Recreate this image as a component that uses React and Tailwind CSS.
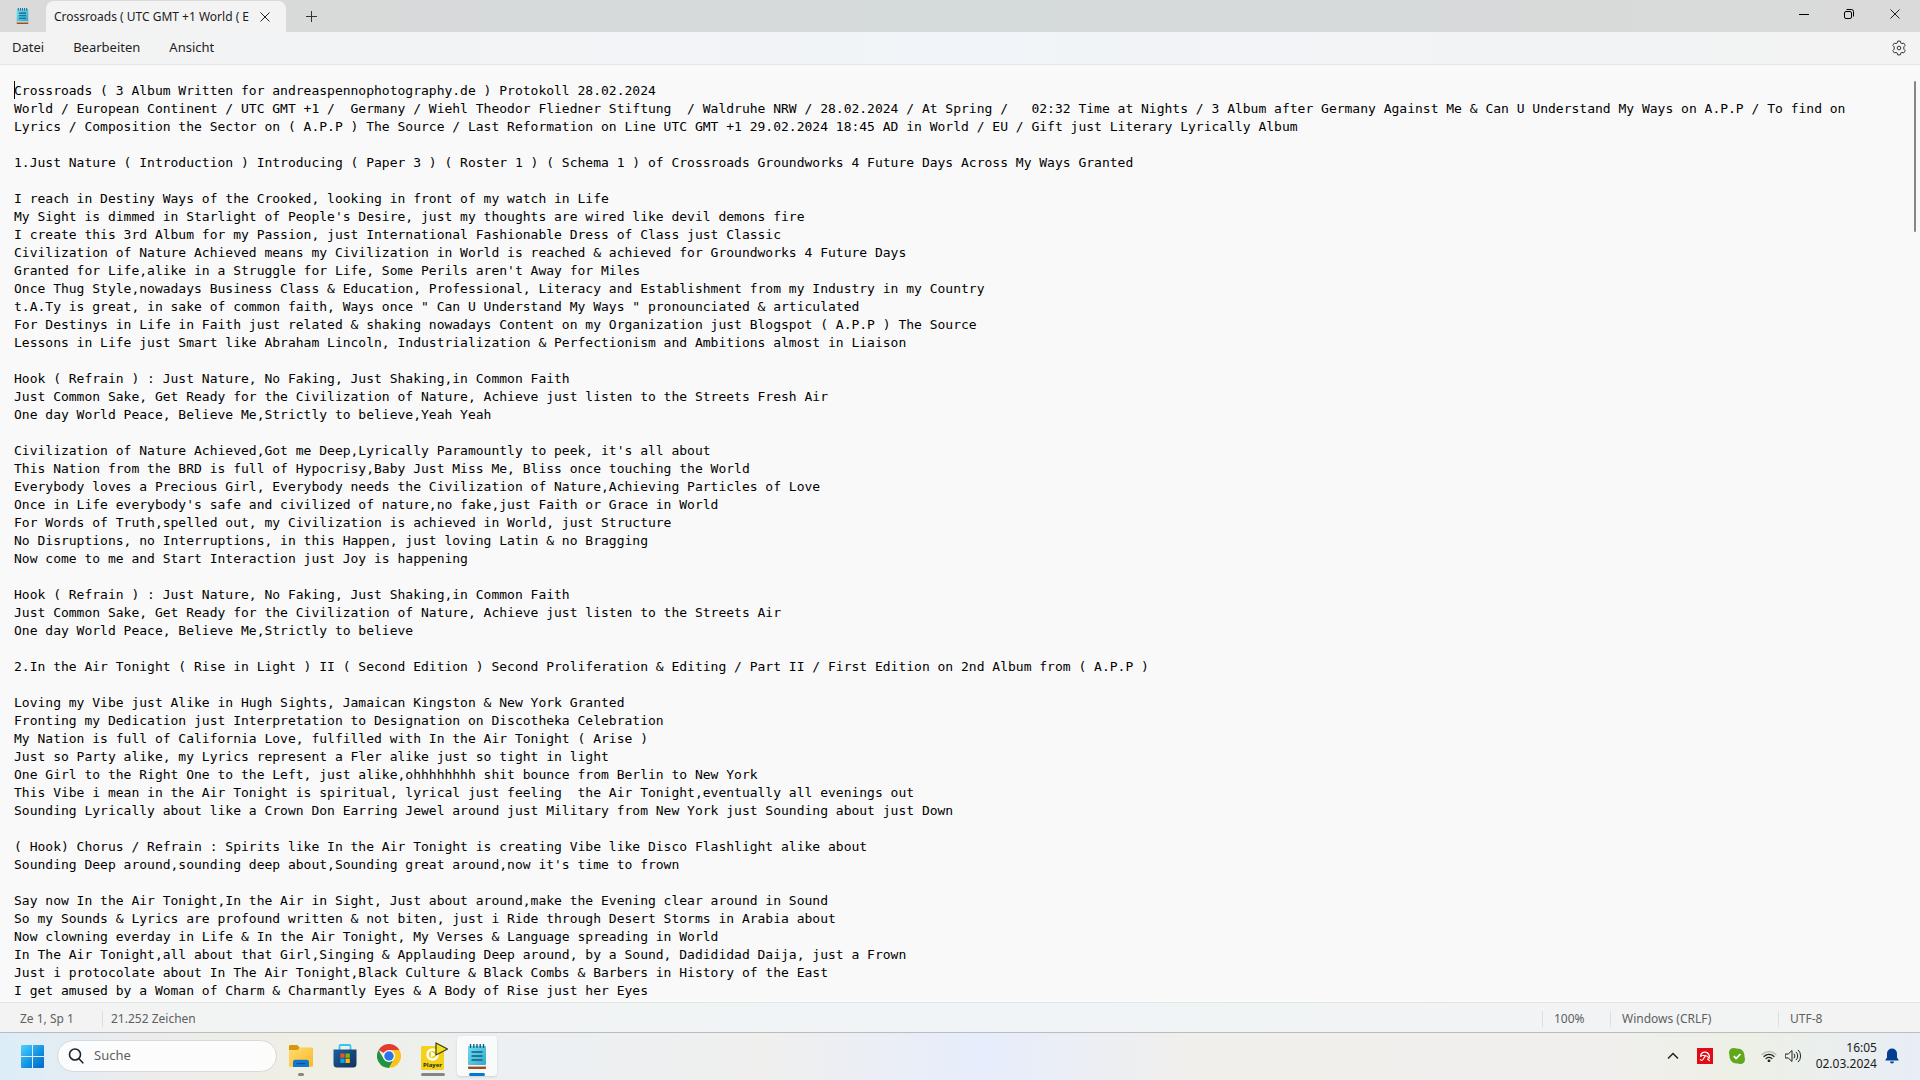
import { useState } from 'react'

const initialText = `Crossroads ( 3 Album Written for andreaspennophotography.de ) Protokoll 28.02.2024
World / European Continent / UTC GMT +1 /  Germany / Wiehl Theodor Fliedner Stiftung  / Waldruhe NRW / 28.02.2024 / At Spring /   02:32 Time at Nights / 3 Album after Germany Against Me & Can U Understand My Ways on A.P.P / To find on Lyrics / Composition the Sector on ( A.P.P ) The Source / Last Reformation on Line UTC GMT +1 29.02.2024 18:45 AD in World / EU / Gift just Literary Lyrically Album

1.Just Nature ( Introduction ) Introducing ( Paper 3 ) ( Roster 1 ) ( Schema 1 ) of Crossroads Groundworks 4 Future Days Across My Ways Granted

I reach in Destiny Ways of the Crooked, looking in front of my watch in Life
My Sight is dimmed in Starlight of People's Desire, just my thoughts are wired like devil demons fire
I create this 3rd Album for my Passion, just International Fashionable Dress of Class just Classic
Civilization of Nature Achieved means my Civilization in World is reached & achieved for Groundworks 4 Future Days
Granted for Life,alike in a Struggle for Life, Some Perils aren't Away for Miles
Once Thug Style,nowadays Business Class & Education, Professional, Literacy and Establishment from my Industry in my Country
t.A.Ty is great, in sake of common faith, Ways once " Can U Understand My Ways " pronounciated & articulated
For Destinys in Life in Faith just related & shaking nowadays Content on my Organization just Blogspot ( A.P.P ) The Source
Lessons in Life just Smart like Abraham Lincoln, Industrialization & Perfectionism and Ambitions almost in Liaison

Hook ( Refrain ) : Just Nature, No Faking, Just Shaking,in Common Faith
Just Common Sake, Get Ready for the Civilization of Nature, Achieve just listen to the Streets Fresh Air
One day World Peace, Believe Me,Strictly to believe,Yeah Yeah

Civilization of Nature Achieved,Got me Deep,Lyrically Paramountly to peek, it's all about
This Nation from the BRD is full of Hypocrisy,Baby Just Miss Me, Bliss once touching the World
Everybody loves a Precious Girl, Everybody needs the Civilization of Nature,Achieving Particles of Love
Once in Life everybody's safe and civilized of nature,no fake,just Faith or Grace in World
For Words of Truth,spelled out, my Civilization is achieved in World, just Structure
No Disruptions, no Interruptions, in this Happen, just loving Latin & no Bragging
Now come to me and Start Interaction just Joy is happening

Hook ( Refrain ) : Just Nature, No Faking, Just Shaking,in Common Faith
Just Common Sake, Get Ready for the Civilization of Nature, Achieve just listen to the Streets Air
One day World Peace, Believe Me,Strictly to believe

2.In the Air Tonight ( Rise in Light ) II ( Second Edition ) Second Proliferation & Editing / Part II / First Edition on 2nd Album from ( A.P.P )

Loving my Vibe just Alike in Hugh Sights, Jamaican Kingston & New York Granted
Fronting my Dedication just Interpretation to Designation on Discotheka Celebration
My Nation is full of California Love, fulfilled with In the Air Tonight ( Arise )
Just so Party alike, my Lyrics represent a Fler alike just so tight in light
One Girl to the Right One to the Left, just alike,ohhhhhhhh shit bounce from Berlin to New York
This Vibe i mean in the Air Tonight is spiritual, lyrical just feeling  the Air Tonight,eventually all evenings out
Sounding Lyrically about like a Crown Don Earring Jewel around just Military from New York just Sounding about just Down

( Hook) Chorus / Refrain : Spirits like In the Air Tonight is creating Vibe like Disco Flashlight alike about
Sounding Deep around,sounding deep about,Sounding great around,now it's time to frown

Say now In the Air Tonight,In the Air in Sight, Just about around,make the Evening clear around in Sound
So my Sounds & Lyrics are profound written & not biten, just i Ride through Desert Storms in Arabia about
Now clowning everday in Life & In the Air Tonight, My Verses & Language spreading in World
In The Air Tonight,all about that Girl,Singing & Applauding Deep around, by a Sound, Dadididad Daija, just a Frown
Just i protocolate about In The Air Tonight,Black Culture & Black Combs & Barbers in History of the East
I get amused by a Woman of Charm & Charmantly Eyes & A Body of Rise just her Eyes`

const menus = ['Datei', 'Bearbeiten', 'Ansicht']

function NotepadIcon({ className }) {
  return (
    <svg viewBox="0 0 20 25" className={className} aria-hidden="true">
      <defs>
        <linearGradient id="pad" x1="0" y1="0" x2="1" y2="1">
          <stop offset="0" stopColor="#6fdcf2" />
          <stop offset="1" stopColor="#35a9cc" />
        </linearGradient>
      </defs>
      <rect x="1" y="20" width="18" height="5" rx="1" fill="#a34a17" />
      <rect x="1" y="20" width="18" height="2.6" fill="#f3f3f3" />
      <rect x="1" y="2" width="18" height="19" rx="1" fill="url(#pad)" />
      <path d="M3.5 0v4M6.8 0v4M10 0v4M13.2 0v4M16.5 0v4" stroke="#14607c" strokeWidth="1.4" />
      <path d="M4.5 8h11M4.5 12h11M4.5 16h11" stroke="#0f5f80" strokeWidth="1.6" />
    </svg>
  )
}

function WindowsIcon() {
  return (
    <svg viewBox="0 0 23 23" className="size-[23px]" aria-hidden="true">
      <defs>
        <linearGradient id="win" gradientUnits="userSpaceOnUse" x1="0" y1="0" x2="23" y2="23">
          <stop offset="0" stopColor="#4fd0ff" />
          <stop offset="0.55" stopColor="#1593e2" />
          <stop offset="1" stopColor="#0067c8" />
        </linearGradient>
      </defs>
      <path d="M1 0h10v11H0V1a1 1 0 0 1 1-1zM12 0h10a1 1 0 0 1 1 1v10H12zM0 12h11v11H1a1 1 0 0 1-1-1zM12 12h11v10a1 1 0 0 1-1 1H12z" fill="url(#win)" />
    </svg>
  )
}

function FolderIcon() {
  return (
    <svg viewBox="0 0 24 22" className="h-[22px] w-6" aria-hidden="true">
      <defs>
        <linearGradient id="folder" x1="0" y1="0" x2="1" y2="1">
          <stop offset="0" stopColor="#ffdc6e" />
          <stop offset="1" stopColor="#f9b92b" />
        </linearGradient>
      </defs>
      <path d="M0 1.2A1.2 1.2 0 0 1 1.2 0h7l2.5 2.4V6H0z" fill="#d9960a" />
      <path d="M0 5h8.6l2.2-2.4H23a1 1 0 0 1 1 1v17.200a1 1 0 0 1-1 1H1a1 1 0 0 1-1-1z" fill="url(#folder)" />
      <path d="M4 22v-5a2.300 2.300 0 0 1 2.300-2.300h11.400A2.300 2.300 0 0 1 20 17v5z" fill="#1277cf" />
      <path d="M7.500 18.600h9" stroke="#0b4f96" strokeWidth="1.200" />
    </svg>
  )
}

function StoreIcon() {
  return (
    <svg viewBox="0 0 24 24" className="size-6" aria-hidden="true">
      <defs>
        <linearGradient id="store" x1="0" y1="0" x2="1" y2="1">
          <stop offset="0" stopColor="#1c5f9e" />
          <stop offset="1" stopColor="#152f5c" />
        </linearGradient>
      </defs>
      <path d="M6.500 6V2.200A1.200 1.200 0 0 1 7.700 1h8.600a1.200 1.200 0 0 1 1.200 1.200V6" fill="none" stroke="#37c3f5" strokeWidth="1.800" />
      <path d="M.5 5.500h23V20a3.500 3.500 0 0 1-3.500 3.500H4A3.500 3.500 0 0 1 .5 20z" fill="url(#store)" />
      <path d="M7.300 9.500h4.300v4.300H7.300z" fill="#f25022" />
      <path d="M12.500 9.500h4.300v4.300h-4.300z" fill="#7fba00" />
      <path d="M7.300 14.700h4.300V19H7.300z" fill="#00a4ef" />
      <path d="M12.500 14.700h4.300V19h-4.300z" fill="#ffb900" />
    </svg>
  )
}

function ChromeIcon() {
  return (
    <svg viewBox="0 0 48 48" className="size-6" aria-hidden="true">
      <path d="M24 24 3.200 12A24 24 0 0 1 44.800 12z" fill="#e33b2e" />
      <path d="M3.200 12 13.600 30 24 36l5-1-5 13A24 24 0 0 1 3.200 12z" fill="#229342" />
      <path d="M24 34.500 34.400 30 24 48z" fill="#229342" />
      <path d="M34.400 30 24 48a24 24 0 0 0 20.800-36H24z" fill="#fcc31e" />
      <circle cx="24" cy="24" r="12" fill="#fff" />
      <circle cx="24" cy="24" r="9.500" fill="#2a74e8" />
    </svg>
  )
}

function PlayerIcon() {
  return (
    <svg viewBox="0 0 28 28" className="ml-1 size-7" aria-hidden="true">
      <rect x="0" y="4" width="23" height="24" rx="1.500" fill="#f2d21b" />
      <circle cx="11.500" cy="12.500" r="5" fill="none" stroke="#fff" strokeWidth="2.500" />
      <path d="M10 9.500v6l4.500-3z" fill="#fff" />
      <text x="11.500" y="25" textAnchor="middle" fontSize="6" fontWeight="700" fontFamily="Open Sans, sans-serif" fill="#2a2a10">
        Player
      </text>
      <path d="M15 1v12l11.500-6z" fill="#f2e01c" stroke="#3a3a1a" strokeWidth="1.200" strokeLinejoin="round" />
    </svg>
  )
}

function GearIcon() {
  return (
    <svg viewBox="0 0 16 16" className="size-4" fill="none" stroke="#333" strokeLinejoin="round" aria-hidden="true">
      <path d="M6.600 1.200 Q8 .8 9.400 1.200 L9.800 3 L10.900 3.600 L12.700 3.100 Q13.700 4.200 14.100 5.500 L12.800 6.900 V9.100 L14.100 10.500 Q13.700 11.800 12.700 12.900 L10.900 12.400 L9.800 13 L9.400 14.800 Q8 15.200 6.600 14.800 L6.200 13 L5.100 12.400 L3.300 12.900 Q2.300 11.800 1.900 10.500 L3.200 9.100 V6.900 L1.900 5.500 Q2.300 4.200 3.300 3.100 L5.100 3.600 L6.200 3 Z" />
      <circle cx="8" cy="8" r="1.800" />
    </svg>
  )
}

function CloseIcon() {
  return (
    <svg viewBox="0 0 10 10" className="size-[10px]" stroke="#222" aria-hidden="true">
      <path d="M.5.5l9 9M9.500.5l-9 9" />
    </svg>
  )
}

function TitleBar() {
  return (
    <header className="flex h-8 shrink-0 items-stretch bg-linear-to-r from-[#dadada] via-[#d5dadb] to-[#dadada]">
      <div className="flex w-[46px] items-center pl-4">
        <NotepadIcon className="h-4 w-[13px]" />
      </div>
      <div className="mt-px flex w-60 items-center rounded-t-lg bg-[#f3f3f3] pl-2">
        <span className="w-48 whitespace-nowrap text-[12px] text-[#1b1b1b]">
          Crossroads ( UTC GMT +1 World ( E
        </span>
        <button type="button" aria-label="Tab schließen" className="ml-[10px] p-1">
          <CloseIcon />
        </button>
      </div>
      <button type="button" aria-label="Neuer Tab" className="ml-3 p-2">
        <svg viewBox="0 0 11 11" className="size-[11px]" stroke="#333" aria-hidden="true">
          <path d="M5.500 0v11M0 5.500h11" />
        </svg>
      </button>
      <div className="ml-auto flex items-center pb-1 pr-0.5">
        <button type="button" aria-label="Minimieren" className="flex w-11 justify-center">
          <svg viewBox="0 0 10 10" className="size-[10px]" stroke="#000" aria-hidden="true">
            <path d="M0 5.500h10" />
          </svg>
        </button>
        <button type="button" aria-label="Verkleinern" className="flex w-[46px] justify-center">
          <svg viewBox="0 0 10 10" className="size-[10px] overflow-visible" fill="none" stroke="#000" aria-hidden="true">
            <rect x=".5" y="2.500" width="7" height="7" rx="1.500" />
            <path d="M2.500.5H7.500A2 2 0 0 1 9.500 2.500v5" />
          </svg>
        </button>
        <button type="button" aria-label="Schließen" className="flex w-[46px] justify-center">
          <CloseIcon />
        </button>
      </div>
    </header>
  )
}

function MenuBar() {
  return (
    <nav className="flex h-[33px] shrink-0 items-center justify-between border-b border-[#e5e5e5] bg-linear-to-r from-[#f3f3f3] via-[#f1f4f8] to-[#f3f3f3] pl-3 pr-[13px]">
      <div className="flex gap-[29px] text-[13px] text-[#1f1f1f]">
        {menus.map((menu) => (
          <button key={menu} type="button">
            {menu}
          </button>
        ))}
      </div>
      <button type="button" aria-label="Einstellungen">
        <GearIcon />
      </button>
    </nav>
  )
}

function Editor() {
  const [text, setText] = useState(initialText)

  return (
    <main className="relative flex min-h-0 flex-1 bg-[#f9f9f9]">
      <textarea
        aria-label="Texteditor"
        spellCheck={false}
        value={text}
        onChange={(e) => setText(e.target.value)}
        className="flex-1 resize-none overflow-hidden bg-transparent pl-[14px] pr-8 pt-[17px] font-['DejaVu_Sans_Mono',monospace] text-[13px] leading-[18px] text-black outline-none"
      />
      <span className="absolute left-[14px] top-4 h-[18px] w-px bg-black" />
      <span className="absolute right-1 top-4 h-[151px] w-[2px] rounded-full bg-[#868686]" />
    </main>
  )
}

function StatusBar() {
  return (
    <footer className="flex h-[30px] shrink-0 items-center border-t border-[#e5e5e5] bg-linear-to-r from-[#f3f3f3] via-[#f0f4f6] to-[#f3f3f3] pt-0.5 text-[12px] leading-4 text-[#5f5f5f]">
      <span className="w-[102px] pl-5">Ze 1, Sp 1</span>
      <span className="border-l border-[#dedede] pl-2">21.252 Zeichen</span>
      <span className="ml-auto w-[68px] border-l border-[#dedede] pl-[11px]">100%</span>
      <span className="w-[168px] border-l border-[#dedede] pl-[11px]">Windows (CRLF)</span>
      <span className="w-[142px] border-l border-[#dedede] pl-[11px]">UTF-8</span>
    </footer>
  )
}

function TaskButton({ label, indicator, active, children }) {
  return (
    <button
      type="button"
      aria-label={label}
      className={`relative flex h-10 w-10 items-center justify-center rounded ${active ? 'bg-white/70 shadow-sm' : ''}`}
    >
      {children}
      {indicator && <span className={`absolute bottom-0 h-[3px] rounded-full ${indicator}`} />}
    </button>
  )
}

function Taskbar() {
  return (
    <div className="flex h-12 shrink-0 items-center border-t border-[#bcbcbc] bg-[linear-gradient(90deg,#dcedf8_0%,#ececee_7%,#efefe4_16%,#ecf0f3_27%,#efefee_40%,#e7edfc_51%,#f0efec_62%,#f0efed_84%,#edf0e6_91%,#e8edf6_100%)] pb-px">
      <button type="button" aria-label="Start" className="ml-[21px]">
        <WindowsIcon />
      </button>
      <label className="ml-[13px] flex h-8 w-[220px] items-center gap-[10px] rounded-full border border-[#d5dadd] bg-white/85 px-[10px]">
        <svg viewBox="0 0 16 16" className="size-4" fill="none" stroke="#222" strokeWidth="1.600" strokeLinecap="round" aria-hidden="true">
          <circle cx="7" cy="6.500" r="5.500" />
          <path d="M11 10.800l3.800 4" />
        </svg>
        <input
          type="search"
          aria-label="Suche"
          placeholder="Suche"
          className="w-36 bg-transparent text-[13px] text-[#5f5f5f] outline-none placeholder:text-[#5f5f5f]"
        />
      </label>
      <div className="ml-1 flex gap-1">
        <TaskButton label="Explorer" indicator="w-[6px] bg-[#868686]">
          <FolderIcon />
        </TaskButton>
        <TaskButton label="Microsoft Store">
          <StoreIcon />
        </TaskButton>
        <TaskButton label="Chrome">
          <ChromeIcon />
        </TaskButton>
        <TaskButton label="Player" indicator="w-6 bg-[#868686]">
          <PlayerIcon />
        </TaskButton>
        <TaskButton label="Editor" indicator="w-4 bg-[#0078d4]" active>
          <NotepadIcon className="h-[25px] w-5" />
        </TaskButton>
      </div>

      <div className="ml-auto flex items-center pr-[21px]">
        <button type="button" aria-label="Ausgeblendete Symbole" className="mr-[18px]">
          <svg viewBox="0 0 12 8" className="h-2 w-3" fill="none" stroke="#222" strokeWidth="1.500" aria-hidden="true">
            <path d="M1 6.500l5-5 5 5" />
          </svg>
        </button>
        <svg viewBox="0 0 16 16" className="mr-4 size-4" aria-hidden="true">
          <path d="M0 0h16v16H0z" fill="#e20a16" />
          <path d="M3.600 8.600C3.400 5.500 6 3.700 8.600 4.200c2.800.5 4.400 3.200 3.600 6.300" fill="none" stroke="#fff" strokeWidth="1.300" />
          <path d="M3.600 8.600c1.200-1.600 2.600-1.700 4.200-.8 1.800-.2 3.400.8 4.400 2.700" fill="none" stroke="#fff" strokeWidth="1.100" />
          <path d="M8.600 7.500l-2.600 4c-.8 1.200-2.200 1.100-2.600.1M10.500 11l2 1.600" fill="none" stroke="#fff" strokeWidth="1.200" strokeLinecap="round" />
        </svg>
        <svg viewBox="0 0 16 16" className="mr-4 size-4" aria-hidden="true">
          <path d="M4.500 0C6 0 6.500.5 8 .5c5 0 7.500 3.500 7.500 7.500 0 1.500.5 2 .5 3.500a4.500 4.500 0 0 1-4.500 4.500c-1.500 0-2-.5-3.500-.5C3.500 15.500.5 12 .5 8 .5 6.500 0 6 0 4.500A4.500 4.500 0 0 1 4.500 0z" fill="#5fa91a" />
          <path d="M4.800 8.200l2.300 2.300 4.300-4.500" fill="none" stroke="#fff" strokeWidth="1.800" />
        </svg>
        <svg viewBox="0 0 16 12" className="mr-2 h-3 w-4" fill="none" stroke="#222" strokeWidth="1.200" strokeLinecap="round" aria-hidden="true">
          <path d="M1 4.500a10 10 0 0 1 14 0" stroke="#b5b5b5" />
          <path d="M3 6.500a7 7 0 0 1 10 0M5 8.600a4.200 4.200 0 0 1 6 0" />
          <circle cx="8" cy="10.800" r=".8" fill="#222" />
        </svg>
        <svg viewBox="0 0 17 14" className="mr-[14px] h-[14px] w-[17px]" fill="none" stroke="#222" strokeLinecap="round" strokeLinejoin="round" aria-hidden="true">
          <path d="M.6 5h2.600L7 1.500v11L3.200 9H.6zM9.200 5a3 3 0 0 1 0 4M11.300 3.200a5.500 5.500 0 0 1 0 7.600M13.400 1.200a8.400 8.400 0 0 1 0 11.600" />
        </svg>
        <div className="mr-2 text-right text-[12px] leading-4 text-[#1b1b1b]">
          <div>16:05</div>
          <div>02.03.2024</div>
        </div>
        <svg viewBox="0 0 14 16" className="h-4 w-[14px]" fill="#003e92" aria-hidden="true">
          <path d="M7 .5a5 5 0 0 1 5 5v4l1.500 2.300v.7H.5v-.7L2 9.500v-4a5 5 0 0 1 5-5zM5 13.500h4a2 2 0 0 1-4 0z" />
        </svg>
      </div>
    </div>
  )
}

export default function App() {
  return (
    <div className="flex h-screen flex-col overflow-hidden font-['Noto_Sans',sans-serif]">
      <TitleBar />
      <MenuBar />
      <Editor />
      <StatusBar />
      <Taskbar />
    </div>
  )
}
